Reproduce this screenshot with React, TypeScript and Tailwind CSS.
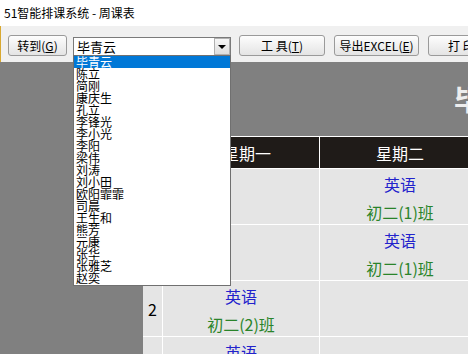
import React from 'react';

const NAMES = [
  '毕青云', '陈立', '简刚', '康庆生', '孔立', '李锋光', '李小光', '李阳', '梁伟', '刘涛',
  '刘小田', '欧阳霏霏', '司晨', '王生和', '熊芳', '元康', '张华', '张雅芝', '赵奕',
];

type Lesson = { subject: string; klass: string } | null;

const ROWS: { no: string; mon: Lesson; tue: Lesson }[] = [
  { no: '1', mon: null, tue: { subject: '英语', klass: '初二(1)班' } },
  { no: '', mon: null, tue: { subject: '英语', klass: '初二(1)班' } },
  { no: '2', mon: { subject: '英语', klass: '初二(2)班' }, tue: null },
  { no: '', mon: { subject: '英语', klass: '初二(2)班' }, tue: null },
];

const FONT = { fontFamily: '"Noto Sans CJK SC", "Noto Sans", sans-serif' };

function ToolButton({ children, className }: { children: React.ReactNode; className: string }) {
  return (
    <div
      className={`${className} h-[21px] shrink-0 rounded-[3px] border border-[#9a9a9a] bg-linear-to-b from-[#fdfdfd] to-[#e4e4e4] text-[12px] leading-none text-black flex items-center`}
    >
      {children}
    </div>
  );
}

function Cell({ lesson }: { lesson: Lesson }) {
  return (
    <div className="h-[55px] bg-[#e5e5e5] flex flex-col items-center justify-center pt-[2px] text-[16px] leading-[28px]">
      {lesson && (
        <>
          <span className="text-[#2222cc]">{lesson.subject}</span>
          <span className="text-[#2a842a]">{lesson.klass}</span>
        </>
      )}
    </div>
  );
}

export default function App() {
  return (
    <div className="w-[468px] h-[354px] overflow-hidden bg-white flex flex-col" style={FONT}>
      {/* title bar */}
      <div className="h-[26px] shrink-0 px-[4px] flex items-center text-[12px] text-black">
        51智能排课系统 - 周课表
      </div>

      {/* toolbar */}
      <div className="h-[36px] shrink-0 bg-[#f0f0f0] border-l border-[#d8a830] flex items-end pb-[6px] pl-[7px] whitespace-nowrap">
        <ToolButton className="w-[59px] justify-center">
          转到(<span className="underline">G</span>)
        </ToolButton>

        <div className="relative ml-[6px] w-[158px] h-[19px] shrink-0 border border-[#7a7a7a] bg-white flex items-center">
          <span className="pl-[3px] text-[13px] leading-none flex-1">毕青云</span>
          <div className="w-[16px] h-[17px] border border-[#b0b0b0] bg-linear-to-b from-[#f6f6f6] to-[#dedede] flex items-center justify-center">
            <div className="w-0 h-0 border-l-[4px] border-r-[4px] border-t-[4px] border-l-transparent border-r-transparent border-t-black" />
          </div>

          {/* open list */}
          <div className="absolute left-[-1px] top-full w-[158px] h-[231px] border border-[#707070] bg-white overflow-hidden z-10">
            {NAMES.map((n, i) => (
              <div
                key={n}
                className={`h-[12px] pl-[2px] text-[12px] leading-[12px] ${
                  i === 0 ? 'bg-[#0078d7] text-white' : 'text-black'
                }`}
              >
                {n}
              </div>
            ))}
          </div>
        </div>

        <ToolButton className="ml-[8px] w-[86px] justify-start pl-[21px]">
          工 具(<span className="underline">T</span>)
        </ToolButton>
        <ToolButton className="ml-[9px] w-[85px] justify-center">
          导出EXCEL(<span className="underline">E</span>)
        </ToolButton>
        <ToolButton className="ml-[9px] w-[86px] justify-start pl-[19px]">
          打 印(<span className="underline">P</span>)
        </ToolButton>
      </div>

      {/* page body */}
      <div className="flex-1 bg-[#808080] flex flex-col overflow-hidden">
        <div className="h-[74px] shrink-0 pl-[454px] flex items-center whitespace-nowrap overflow-hidden">
          <span className="text-[28px] font-bold text-[#ededed] leading-none">毕青云老师课表</span>
        </div>

        <div className="ml-[143px] w-[400px] grid grid-cols-[19px_156px_160px] gap-px bg-white pt-px">
          <div className="h-[31px] bg-[#1f1b18]" />
          <div className="h-[31px] bg-[#1f1b18] text-white text-[16px] flex items-center justify-center pl-[12px]">
            星期一
          </div>
          <div className="h-[31px] bg-[#1f1b18] text-white text-[16px] flex items-center justify-center">
            星期二
          </div>
          {ROWS.map((r, i) => (
            <React.Fragment key={i}>
              <div className="h-[55px] bg-[#e5e5e5] flex items-center justify-center text-[16px] text-black">
                {r.no}
              </div>
              <Cell lesson={r.mon} />
              <Cell lesson={r.tue} />
            </React.Fragment>
          ))}
        </div>
      </div>
    </div>
  );
}
